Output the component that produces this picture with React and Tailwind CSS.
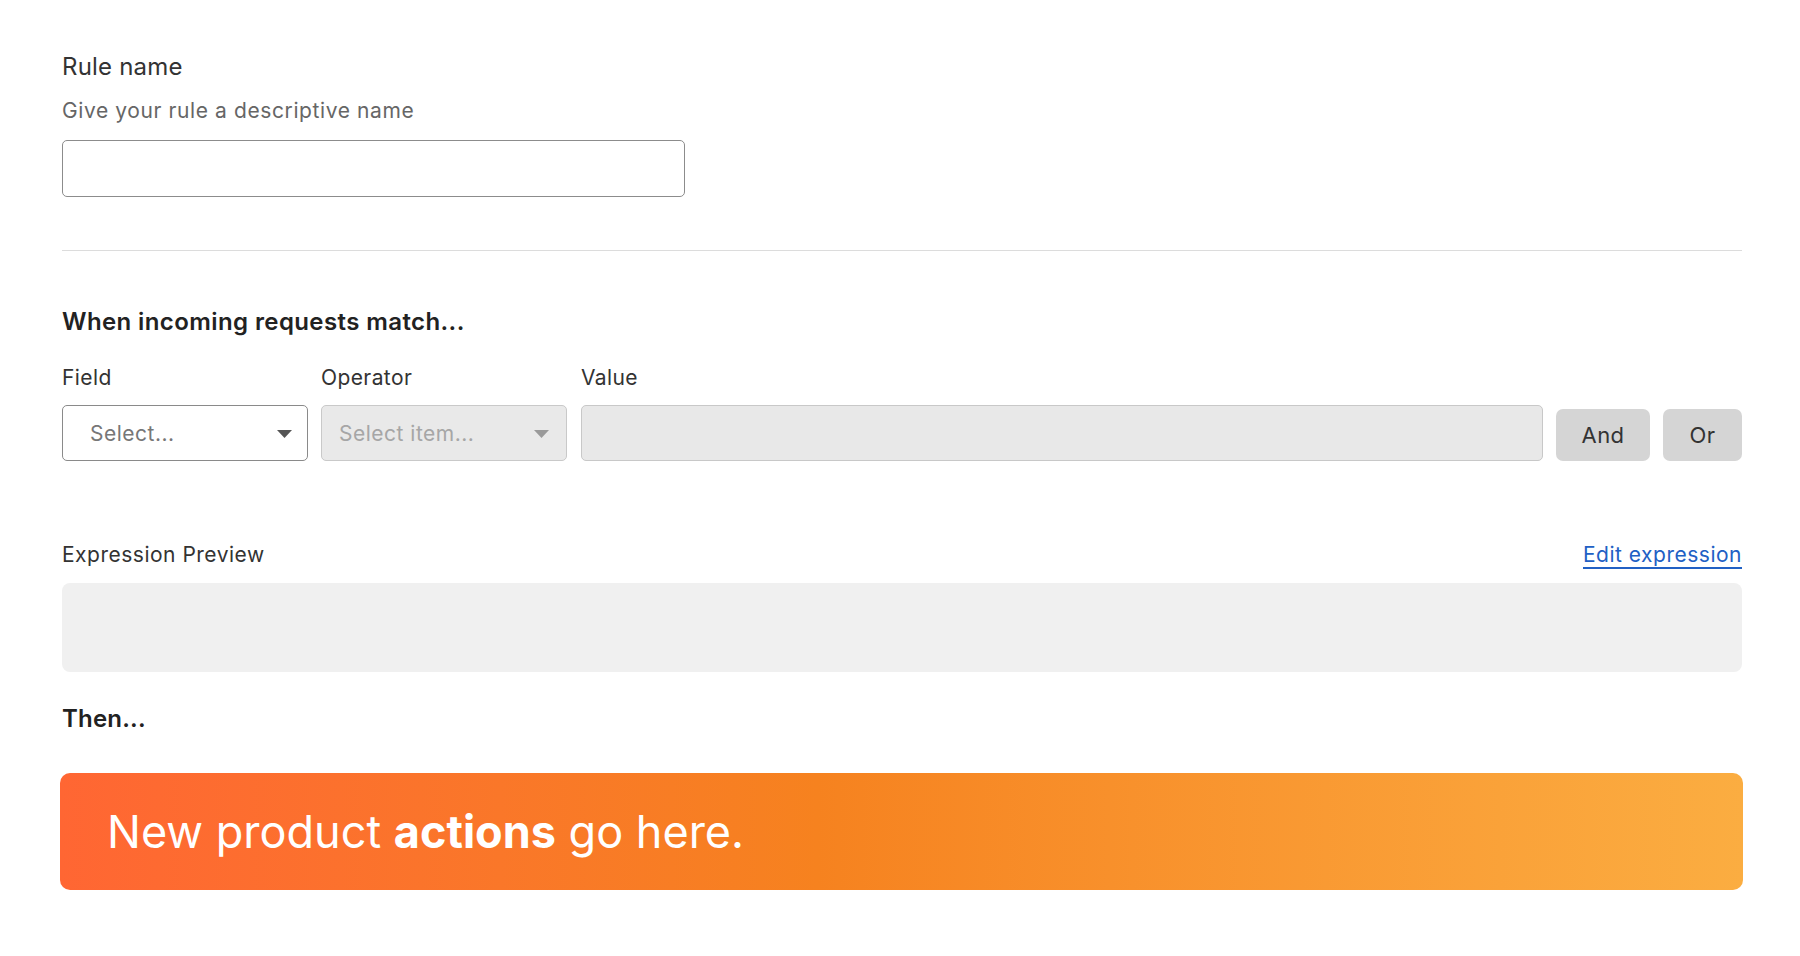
import React from "react";

function Caret({ color }) {
  return (
    <svg width="15" height="8" viewBox="0 0 15 8" className="shrink-0">
      <path d="M0 0 L15 0 L7.5 8 Z" fill={color} />
    </svg>
  );
}

export default function App() {
  return (
    <div
      className="min-h-screen w-full bg-white pl-[62px] pr-[58px] pt-[52px] text-[#333]"
      style={{ fontFamily: "Inter, 'Noto Sans', 'Liberation Sans', sans-serif" }}
    >
      <div className="text-[24px] leading-[29px] tracking-[0.2px] text-[#333]">Rule name</div>
      <div className="mt-[17px] text-[21px] leading-[25px] tracking-[0.6px] text-[#666]">
        Give your rule a descriptive name
      </div>
      <input
        type="text"
        className="mt-[17px] block h-[57px] w-[623px] rounded-[5px] border border-[#8c8c8c] bg-white px-4 outline-none"
      />

      <div className="mt-[53px] h-px w-full bg-[#dcdcdc]" />

      <div className="mt-[56px] text-[24px] font-semibold leading-[29px] tracking-[0.4px] text-[#222]">
        When incoming requests match...
      </div>

      <div className="mt-[29px] flex gap-[13px] text-[21px] leading-[25px] tracking-[0.4px] text-[#333]">
        <div className="w-[246px]">Field</div>
        <div className="w-[247px]">Operator</div>
        <div className="flex-1">Value</div>
      </div>

      <div className="mt-[15px] flex items-end gap-[13px]">
        <div className="flex h-[56px] w-[246px] items-center justify-between rounded-[5px] border border-[#8a8a8a] bg-white pl-[27px] pr-[15px] pt-[2px] text-[21px] tracking-[0.5px] text-[#777]">
          <span>Select...</span>
          <Caret color="#555" />
        </div>
        <div className="flex h-[56px] w-[246px] items-center justify-between rounded-[5px] border border-[#c9c9c9] bg-[#e9e9e9] pl-[17px] pr-[17px] pt-[2px] text-[21px] tracking-[0.5px] text-[#a6a6a6]">
          <span>Select item...</span>
          <Caret color="#9a9a9a" />
        </div>
        <div className="ml-[1px] h-[56px] flex-1 rounded-[5px] border border-[#c8c8c8] bg-[#e8e8e8]" />
        <button className="h-[52px] w-[94px] rounded-[7px] bg-[#d5d5d5] text-[22px] tracking-[0.4px] text-[#333]">
          And
        </button>
        <button className="h-[52px] w-[79px] rounded-[7px] bg-[#d5d5d5] text-[22px] tracking-[0.4px] text-[#333]">
          Or
        </button>
      </div>

      <div className="mt-[81px] flex items-baseline justify-between text-[21px] leading-[26px] tracking-[0.5px]">
        <span className="text-[#333]">Expression Preview</span>
        <a href="#" className="text-[#2160c4] underline decoration-[2px] underline-offset-[5px]">
          Edit expression
        </a>
      </div>

      <div className="mt-[15px] h-[89px] w-full rounded-[8px] bg-[#f0f0f0]" />

      <div className="mt-[32px] text-[24px] font-semibold leading-[29px] tracking-[0.2px] text-[#222]">Then...</div>

      <div className="-ml-[2px] -mr-[1px] mt-[40px] flex h-[117px] items-center rounded-[10px] bg-linear-to-r from-[#ff6633] via-[#f6821f] via-45% to-[#fbad41] pl-[47px] text-[45px] text-white">
        <span>
          New product <span className="font-bold">actions</span> go here.
        </span>
      </div>
    </div>
  );
}
